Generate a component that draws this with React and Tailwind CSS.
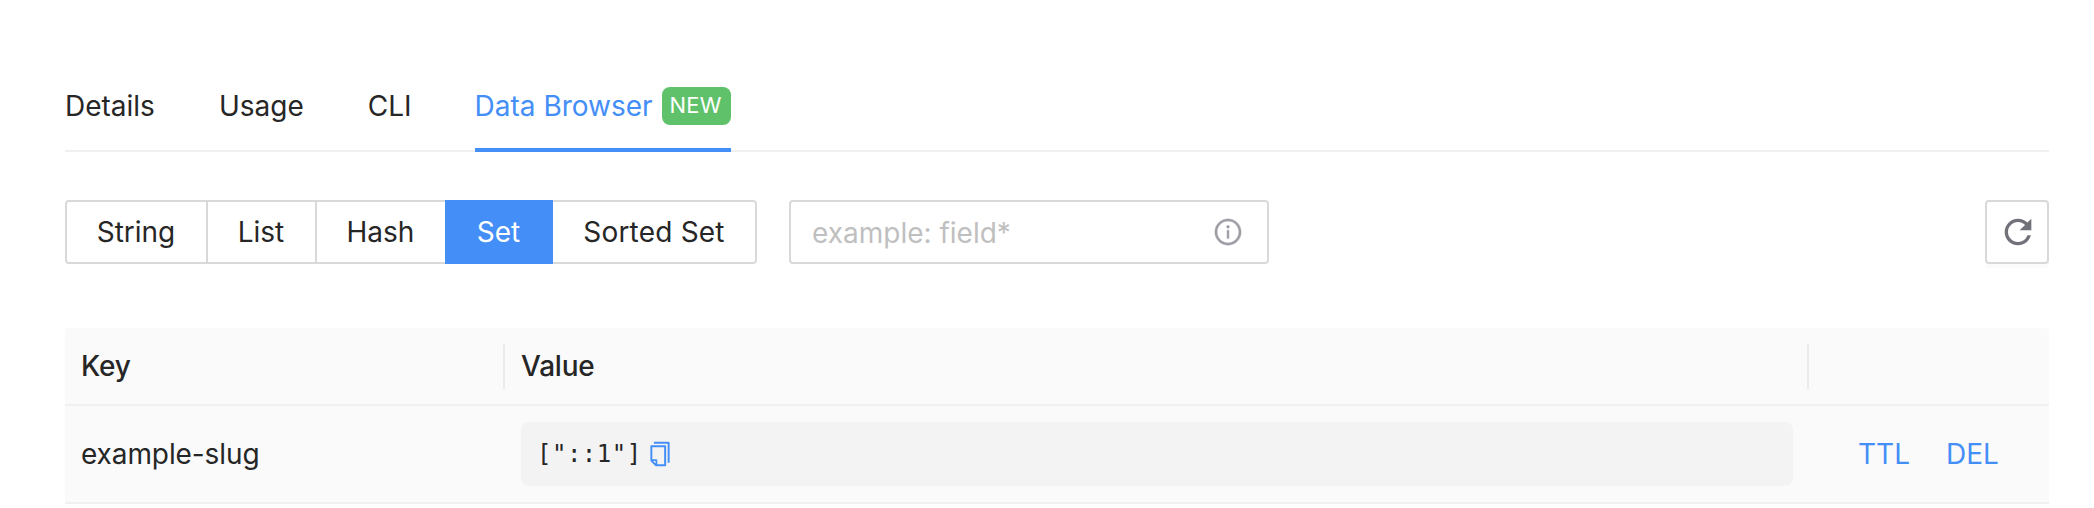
import { AiOutlineCopy, AiOutlineInfoCircle } from "react-icons/ai";
import { MdRefresh } from "react-icons/md";

const types = [
  { label: "String", cls: "w-[143px] rounded-l-[4px] border-2 border-[#d9d9d9] pr-px" },
  { label: "List", cls: "w-[109px] border-y-2 border-r-2 border-[#d9d9d9] pr-px" },
  { label: "Hash", cls: "w-[128px] border-y-2 border-[#d9d9d9] pr-px" },
  { label: "Set", cls: "w-[108px] bg-[#448ef7] pr-px text-white" },
  { label: "Sorted Set", cls: "w-[204px] rounded-r-[4px] border-y-2 border-r-2 border-[#d9d9d9] tracking-[0.2px]" },
];

function Tabs() {
  return (
    <nav className="flex h-[86px] gap-16 border-b-2 border-[#f0f0f0]">
      {["Details", "Usage", "CLI"].map((t) => (
        <button key={t} className="flex h-20 items-center">{t}</button>
      ))}
      <button className="-ml-px flex h-[86px] items-center gap-[9px] border-b-4 border-[#448ef7] pb-[2px] text-[#448ef7]">
        <span>Data Browser</span>
        <span className="flex h-[38px] w-[69px] items-center justify-center rounded-lg bg-[#5fc26a] pr-px pb-[2px] text-[22px] tracking-[0.3px] text-white">
          NEW
        </span>
      </button>
    </nav>
  );
}

function Toolbar() {
  return (
    <div className="mt-12 flex h-16">
      <div className="flex">
        {types.map((t) => (
          <button key={t.label} className={"flex items-center justify-center " + t.cls}>
            {t.label}
          </button>
        ))}
      </div>
      <div className="ml-8 flex w-[480px] items-center rounded-[4px] border-2 border-[#d9d9d9] pr-[24px] pl-[21px]">
        <input
          className="min-w-0 flex-1 pt-px outline-none placeholder:text-[#bfbfbf]"
          placeholder="example: field*"
        />
        <AiOutlineInfoCircle className="size-[30px] overflow-visible stroke-[#9c9ca6] text-[#9c9ca6]" strokeWidth={16} />
      </div>
      <button className="ml-auto flex w-16 items-center justify-center rounded-[4px] border-2 border-[#d9d9d9] pl-[2px] text-[#71717a] shadow-[0_4px_0_rgba(0,0,0,0.016)]">
        <MdRefresh className="size-10" />
      </button>
    </div>
  );
}

function Table() {
  return (
    <div className="mt-16 overflow-hidden rounded-t-[4px] bg-[#fafafa]">
      <div className="flex h-[78px] items-center border-b-2 border-[#f0f0f0] font-medium tracking-[-0.2px]">
        <div className="w-[438px] pl-4">Key</div>
        <div className="h-[45px] w-[2px] bg-[#ebebeb]" />
        <div className="w-[1302px] pl-4">Value</div>
        <div className="h-[45px] w-[2px] bg-[#ebebeb]" />
      </div>
      <div className="flex h-[98px] items-center border-b-2 border-[#f0f0f0]">
        <div className="w-[456px] pl-4 tracking-[-0.1px]">example-slug</div>
        <div className="flex h-16 w-[1272px] items-center rounded-lg bg-[#f3f3f3] pl-4">
          <code className="font-['DejaVu_Sans_Mono',monospace] text-[24px] tracking-[0.5px] whitespace-pre">{'["::1"]'}</code>
          <AiOutlineCopy className="ml-[4px] size-7 text-[#448ef7]" />
        </div>
        <div className="flex gap-9 pl-[65px] text-[#448ef7]">
          <a>TTL</a>
          <a>DEL</a>
        </div>
      </div>
    </div>
  );
}

export default function App() {
  return (
    <main className="h-[508px] w-[2094px] overflow-hidden bg-white pt-[66px] pr-[45px] pl-[65px] font-['Inter',sans-serif] text-[28px] leading-[44px] text-[#262626]">
      <Tabs />
      <Toolbar />
      <Table />
    </main>
  );
}
